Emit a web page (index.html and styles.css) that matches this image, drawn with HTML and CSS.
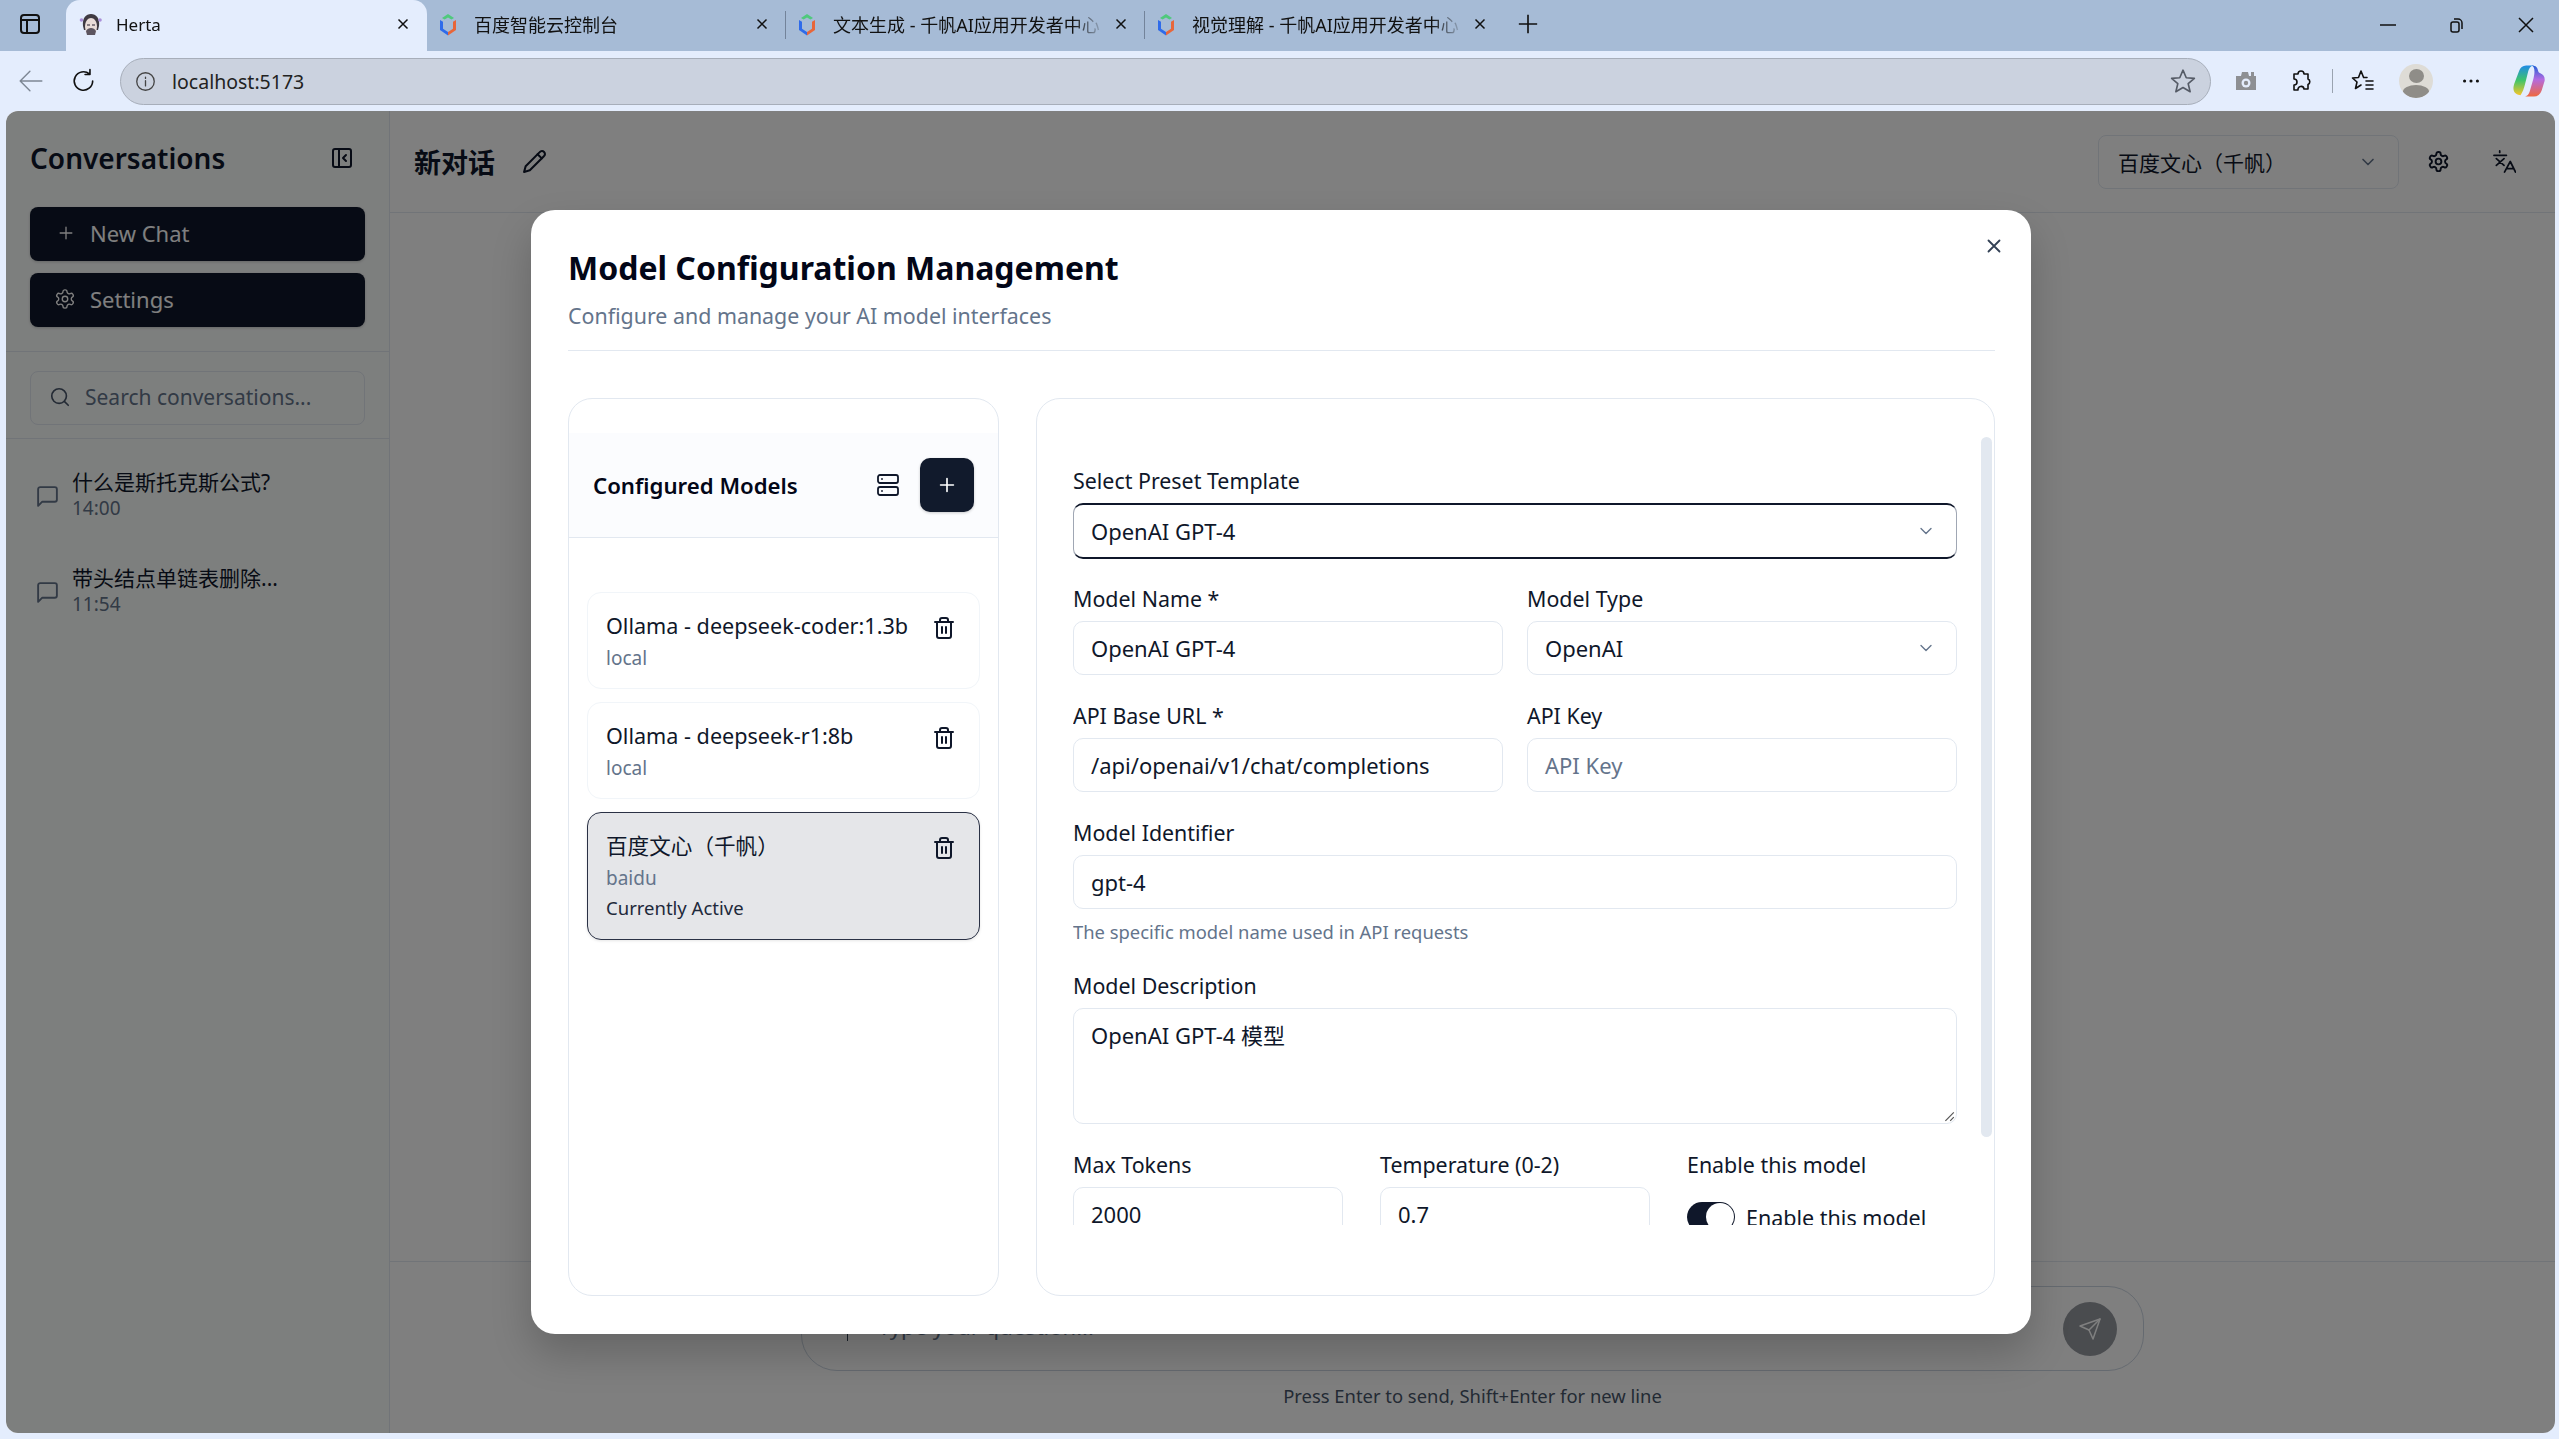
FILE: index.html
```html
<!DOCTYPE html>
<html>

<head>
    <title>Herta</title>
    <link rel="stylesheet" href="styles.css">
</head>

<body>
    <div class="tabstrip">
        <svg class="ico tab-panel" viewBox="0 0 24 24"><rect x="3" y="3" width="18" height="18" rx="3"/><path d="M3 8h18M9 8v13"/></svg>
        <div class="tab active">
            <svg class="favicon" viewBox="0 0 24 24"><path d="M4 14C3 6 7 2 12 2s9 4 8 12l-1 4H5z" fill="#3f3a42"/><path d="M6 15c0-6 3-9 6-9s6 3 6 9l-1 6H7z" fill="#e9dcd8"/><path d="M7 19c1-2 3-3 5-3s4 1 5 3l-1 4H8z" fill="#5c5560"/><circle cx="2.500" cy="8" r="1.800" fill="#a98fd8"/><circle cx="21" cy="8" r="1.800" fill="#a98fd8"/><path d="M8 13h3M13 13h3" stroke="#6a5f68" stroke-width="1.500"/></svg>
            <span class="tab-title">Herta</span>
            <svg class="tab-close" viewBox="0 0 12 12"><path d="M1.500 1.500l9 9M10.500 1.500l-9 9"/></svg>
        </div>
        <div class="tab">
            <svg class="favicon" viewBox="0 0 24 24"><path d="M6 6l6-4 6 4-2.600 1.600L12 5.500 8.600 7.600z" fill="#4fc97c"/><path d="M4 8l3 1.800v7L12 20v3.500L4 18z" fill="#2f6bea"/><path d="M20 8l-3 1.800v7L12 20v3.500L20 18z" fill="#e8663a"/></svg>
            <span class="tab-title">百度智能云控制台</span>
            <svg class="tab-close" viewBox="0 0 12 12"><path d="M1.500 1.500l9 9M10.500 1.500l-9 9"/></svg>
        </div>
        <div class="tab sep">
            <svg class="favicon" viewBox="0 0 24 24"><path d="M6 6l6-4 6 4-2.600 1.600L12 5.500 8.600 7.600z" fill="#4fc97c"/><path d="M4 8l3 1.800v7L12 20v3.500L4 18z" fill="#2f6bea"/><path d="M20 8l-3 1.800v7L12 20v3.500L20 18z" fill="#e8663a"/></svg>
            <span class="tab-title">文本生成 - 千帆AI应用开发者中心</span>
            <svg class="tab-close" viewBox="0 0 12 12"><path d="M1.500 1.500l9 9M10.500 1.500l-9 9"/></svg>
        </div>
        <div class="tab sep">
            <svg class="favicon" viewBox="0 0 24 24"><path d="M6 6l6-4 6 4-2.600 1.600L12 5.500 8.600 7.600z" fill="#4fc97c"/><path d="M4 8l3 1.800v7L12 20v3.500L4 18z" fill="#2f6bea"/><path d="M20 8l-3 1.800v7L12 20v3.500L20 18z" fill="#e8663a"/></svg>
            <span class="tab-title">视觉理解 - 千帆AI应用开发者中心</span>
            <svg class="tab-close" viewBox="0 0 12 12"><path d="M1.500 1.500l9 9M10.500 1.500l-9 9"/></svg>
        </div>
        <svg class="tab-new" viewBox="0 0 24 24"><path d="M12 2v20M2 12h20"/></svg>
        <div class="window-btns">
            <svg class="ico-win" viewBox="0 0 16 16"><path d="M0 8h16"/></svg>
            <svg class="ico-win" viewBox="0 0 16 16"><rect x="2" y="5" width="8" height="10" rx="2"/><path d="M5 2h4a4 4 0 0 1 4 4v6"/></svg>
            <svg class="ico-win" viewBox="0 0 16 16"><path d="M1 1l14 14M15 1L1 15"/></svg>
        </div>
    </div>

    <div class="toolbar">
        <svg class="ico back" viewBox="0 0 24 24"><path d="M22 12H2M11 3l-9 9 9 9"/></svg>
        <svg class="ico reload" viewBox="0 0 24 24"><path d="M20 12a8.500 8.500 0 1 1-3-6.500M17.500 1.500v4.500H13"/></svg>
        <div class="addressbar">
            <svg class="ico info" viewBox="0 0 24 24"><circle cx="12" cy="12" r="10"/><path d="M12 11v6M12 7v1.500"/></svg>
            <span class="url">localhost:5173</span>
            <svg class="ico star" viewBox="0 0 24 24"><path d="M12 2l3 7 7.500.6-5.700 4.900 1.800 7.400L12 18l-6.600 3.900 1.800-7.400L1.500 9.600 9 9z"/></svg>
        </div>
        <div class="tool-icons">
            <svg class="tool-ico" viewBox="0 0 24 24"><path d="M2 7h5l1-4h6l1 4h2V3h3v4h2v14H2z" fill="#8d8f93"/><circle cx="12" cy="14" r="4.500" fill="#e4edfd"/><circle cx="12" cy="14" r="2.200" fill="#8d8f93"/></svg>
            <svg class="ico tool-ico" viewBox="0 0 24 24"><path d="M9 5a3 3 0 0 1 6 0h4v5a3 3 0 0 1 0 5.500V20h-4a3 3 0 0 0-6 1H5v-5a3 3 0 0 0 0-6V5z"/></svg>
            <span class="tool-sep"></span>
            <svg class="ico tool-ico" viewBox="0 0 24 24"><path d="M10 2l2.600 6.500H16M10 2L7.500 8.500 1.500 9l4.500 4-1.500 6.500 5.500-3.500M15 12h7M15 16h7M15 20h7"/></svg>
            <div class="avatar"><span class="avatar-head"></span><span class="avatar-body"></span></div>
            <svg class="tool-ico dots" viewBox="0 0 24 24"><circle cx="5" cy="12" r="1.700"/><circle cx="12" cy="12" r="1.700"/><circle cx="19" cy="12" r="1.700"/></svg>
            <svg class="tool-ico copilot" viewBox="0 0 24 24"><defs><linearGradient id="cp1" x1="0" y1="0" x2="0" y2="1"><stop offset="0" stop-color="#1f8be8"/><stop offset=".5" stop-color="#3fc46a"/><stop offset="1" stop-color="#f5c52a"/></linearGradient><linearGradient id="cp2" x1="0" y1="0" x2="0" y2="1"><stop offset="0" stop-color="#1f5fd8"/><stop offset=".45" stop-color="#b36be0"/><stop offset="1" stop-color="#f0683f"/></linearGradient></defs><path d="M10 1h5c-2 .5-3 2-3.500 4L9 15c-.5 2-1.500 5-3 7-2-.2-5-1-5-5 0-1 .3-2 .6-3L5 5c.8-2.500 2.500-4 5-4z" fill="url(#cp1)"/><path d="M14 1c3 0 4 1.500 4.500 4 .2 1 .3 1 1.500 1.500 2 .8 3.500 2.500 3 5.500l-2 6.500c-1 3-3 4.500-5.500 4.500H8c3 0 4-2 4.600-4l2.600-9C16 7 16.500 2 14 1z" fill="url(#cp2)"/></svg>
        </div>
    </div>

    <div class="page">
        <aside class="sidebar">
            <div class="side-head">
                <h2 class="side-title">Conversations</h2>
                <svg class="ico side-toggle" viewBox="0 0 24 24"><rect x="3" y="3" width="18" height="18" rx="2"/><path d="M9 3v18M16 15l-3-3 3-3"/></svg>
            </div>
            <div class="side-actions">
                <div class="dark-btn"><svg class="ico" viewBox="0 0 24 24"><path d="M5 12h14M12 5v14"/></svg>New Chat</div>
                <div class="dark-btn"><svg class="ico gear-small" viewBox="0 0 24 24"><path d="M12.220 2h-.44a2 2 0 0 0-2 2v.18a2 2 0 0 1-1 1.730l-.43.25a2 2 0 0 1-2 0l-.15-.08a2 2 0 0 0-2.730.73l-.22.38a2 2 0 0 0 .73 2.730l.15.1a2 2 0 0 1 1 1.720v.51a2 2 0 0 1-1 1.740l-.15.09a2 2 0 0 0-.73 2.730l.22.38a2 2 0 0 0 2.730.73l.15-.08a2 2 0 0 1 2 0l.43.25a2 2 0 0 1 1 1.730V20a2 2 0 0 0 2 2h.44a2 2 0 0 0 2-2v-.18a2 2 0 0 1 1-1.730l.43-.25a2 2 0 0 1 2 0l.15.08a2 2 0 0 0 2.730-.73l.22-.39a2 2 0 0 0-.73-2.730l-.15-.08a2 2 0 0 1-1-1.740v-.5a2 2 0 0 1 1-1.740l.15-.09a2 2 0 0 0 .73-2.730l-.22-.38a2 2 0 0 0-2.730-.73l-.15.08a2 2 0 0 1-2 0l-.43-.25a2 2 0 0 1-1-1.730V4a2 2 0 0 0-2-2z"/><circle cx="12" cy="12" r="3"/></svg>Settings</div>
            </div>
            <div class="side-search">
                <div class="search-box">
                    <svg class="ico" viewBox="0 0 24 24"><circle cx="11" cy="11" r="8"/><path d="M21 21l-4.300-4.300"/></svg>
                    <span>Search conversations...</span>
                </div>
            </div>
            <div class="conv-list">
                <div class="conv">
                    <svg class="ico" viewBox="0 0 24 24"><path d="M21 15a2 2 0 0 1-2 2H7l-4 4V5a2 2 0 0 1 2-2h14a2 2 0 0 1 2 2z"/></svg>
                    <div><div class="conv-name">什么是斯托克斯公式?</div><div class="conv-time">14:00</div></div>
                </div>
                <div class="conv">
                    <svg class="ico" viewBox="0 0 24 24"><path d="M21 15a2 2 0 0 1-2 2H7l-4 4V5a2 2 0 0 1 2-2h14a2 2 0 0 1 2 2z"/></svg>
                    <div><div class="conv-name">带头结点单链表删除...</div><div class="conv-time">11:54</div></div>
                </div>
            </div>
        </aside>

        <main class="chat">
            <header class="chat-head">
                <h1 class="chat-title">新对话</h1>
                <svg class="ico edit" viewBox="0 0 24 24"><path d="M17 3a2.850 2.830 0 1 1 4 4L7.500 20.500 2 22l1.500-5.500Z"/><path d="M15 5l4 4"/></svg>
                <div class="model-select"><span>百度文心（千帆）</span><svg class="ico" viewBox="0 0 24 24"><path d="M6 9l6 6 6-6"/></svg></div>
                <svg class="ico head-gear" viewBox="0 0 24 24"><path d="M12.220 2h-.44a2 2 0 0 0-2 2v.18a2 2 0 0 1-1 1.730l-.43.25a2 2 0 0 1-2 0l-.15-.08a2 2 0 0 0-2.730.73l-.22.38a2 2 0 0 0 .73 2.730l.15.1a2 2 0 0 1 1 1.720v.51a2 2 0 0 1-1 1.740l-.15.09a2 2 0 0 0-.73 2.730l.22.38a2 2 0 0 0 2.730.73l.15-.08a2 2 0 0 1 2 0l.43.25a2 2 0 0 1 1 1.730V20a2 2 0 0 0 2 2h.44a2 2 0 0 0 2-2v-.18a2 2 0 0 1 1-1.730l.43-.25a2 2 0 0 1 2 0l.15.08a2 2 0 0 0 2.730-.73l.22-.39a2 2 0 0 0-.73-2.730l-.15-.08a2 2 0 0 1-1-1.740v-.5a2 2 0 0 1 1-1.740l.15-.09a2 2 0 0 0 .73-2.730l-.22-.38a2 2 0 0 0-2.730-.73l-.15.08a2 2 0 0 1-2 0l-.43-.25a2 2 0 0 1-1-1.730V4a2 2 0 0 0-2-2z"/><circle cx="12" cy="12" r="3"/></svg>
                <svg class="ico head-lang" viewBox="0 0 24 24"><path d="M7 1v1.500M1 5.500h13M3.500 9l8 7M11.500 9l-8 7M12 23l6-11 5.500 11M14 19.500h7.500"/></svg>
            </header>
            <div class="chat-body"></div>
            <footer class="chat-foot">
                <div class="composer">
                    <span class="caret"></span>
                    <span class="composer-text">Type your question...</span>
                    <div class="send-btn"><svg class="ico" viewBox="0 0 24 24"><path d="M22 2l-7 20-4-9-9-4z"/><path d="M22 2L11 13"/></svg></div>
                </div>
                <div class="hint">Press Enter to send, Shift+Enter for new line</div>
            </footer>
        </main>

        <div class="overlay"></div>

        <section class="modal">
            <svg class="ico modal-close" viewBox="0 0 24 24"><path d="M18 6L6 18M6 6l12 12"/></svg>
            <div class="modal-head">
                <h2 class="modal-title">Model Configuration Management</h2>
                <p class="modal-sub">Configure and manage your AI model interfaces</p>
            </div>
            <div class="modal-body">
                <div class="panel models-panel">
                    <div class="models-head">
                        <h3 class="models-title">Configured Models</h3>
                        <svg class="ico server" viewBox="0 0 24 24"><rect x="2" y="2" width="20" height="8" rx="2"/><rect x="2" y="14" width="20" height="8" rx="2"/><path d="M6 6h.01M6 18h.01"/></svg>
                        <div class="add-btn"><svg class="ico" viewBox="0 0 24 24"><path d="M5 12h14M12 5v14"/></svg></div>
                    </div>
                    <div class="model-list">
                        <div class="model-item">
                            <div class="model-info"><div class="model-name">Ollama - deepseek-coder:1.3b</div><div class="model-kind">local</div></div>
                            <svg class="ico trash" viewBox="0 0 24 24"><path d="M3 6h18M19 6v14c0 1-1 2-2 2H7c-1 0-2-1-2-2V6M8 6V4c0-1 1-2 2-2h4c1 0 2 1 2 2v2M10 11v6M14 11v6"/></svg>
                        </div>
                        <div class="model-item">
                            <div class="model-info"><div class="model-name">Ollama - deepseek-r1:8b</div><div class="model-kind">local</div></div>
                            <svg class="ico trash" viewBox="0 0 24 24"><path d="M3 6h18M19 6v14c0 1-1 2-2 2H7c-1 0-2-1-2-2V6M8 6V4c0-1 1-2 2-2h4c1 0 2 1 2 2v2M10 11v6M14 11v6"/></svg>
                        </div>
                        <div class="model-item selected">
                            <div class="model-info"><div class="model-name">百度文心（千帆）</div><div class="model-kind">baidu</div><div class="model-state">Currently Active</div></div>
                            <svg class="ico trash" viewBox="0 0 24 24"><path d="M3 6h18M19 6v14c0 1-1 2-2 2H7c-1 0-2-1-2-2V6M8 6V4c0-1 1-2 2-2h4c1 0 2 1 2 2v2M10 11v6M14 11v6"/></svg>
                        </div>
                    </div>
                </div>

                <div class="panel form-panel">
                    <div class="scroll-thumb"></div>
                    <div class="form-scroll">
                        <div class="field first">
                            <label class="lbl">Select Preset Template</label>
                            <div class="ctl focused">OpenAI GPT-4<svg class="ico chev" viewBox="0 0 24 24"><path d="M6 9l6 6 6-6"/></svg></div>
                        </div>
                        <div class="row two">
                            <div class="field"><label class="lbl">Model Name *</label><div class="ctl">OpenAI GPT-4</div></div>
                            <div class="field"><label class="lbl">Model Type</label><div class="ctl">OpenAI<svg class="ico chev" viewBox="0 0 24 24"><path d="M6 9l6 6 6-6"/></svg></div></div>
                        </div>
                        <div class="row two">
                            <div class="field"><label class="lbl">API Base URL *</label><div class="ctl">/api/openai/v1/chat/completions</div></div>
                            <div class="field"><label class="lbl">API Key</label><div class="ctl placeholder">API Key</div></div>
                        </div>
                        <div class="field">
                            <label class="lbl">Model Identifier</label>
                            <div class="ctl">gpt-4</div>
                            <p class="help">The specific model name used in API requests</p>
                        </div>
                        <div class="field">
                            <label class="lbl">Model Description</label>
                            <div class="ctl area">OpenAI GPT-4 模型<svg class="grip" viewBox="0 0 10 10"><path d="M9 2L2 9M9 6L6 9"/></svg></div>
                        </div>
                        <div class="row three">
                            <div class="field"><label class="lbl">Max Tokens</label><div class="ctl">2000</div></div>
                            <div class="field"><label class="lbl">Temperature (0-2)</label><div class="ctl">0.7</div></div>
                            <div class="field">
                                <label class="lbl">Enable this model</label>
                                <div class="toggle-row"><span class="toggle"><span class="knob"></span></span>Enable this model</div>
                            </div>
                        </div>
                    </div>
                </div>
            </div>
        </section>
    </div>
</body>

</html>
```
FILE: styles.css
```css
* {
    box-sizing: border-box;
}

html,
body {
    margin: 0;
    height: 100%;
    overflow: hidden;
}

body {
    display: flex;
    flex-direction: column;
    background-color: #e4edfd;
    color: #0f172a;
    font-family: "Noto Sans", "Noto Sans CJK SC", sans-serif;
}

h1,
h2,
h3,
p {
    margin: 0;
}

.ico {
    fill: none;
    stroke: currentColor;
    stroke-width: 2;
    stroke-linecap: round;
    stroke-linejoin: round;
    flex-shrink: 0;
}

/* browser chrome */
.tabstrip {
    display: flex;
    align-items: center;
    height: 51px;
    flex-shrink: 0;
    background-color: #a6bbd6;
    color: #111;
    padding-left: 18px;
}

.tab-panel {
    width: 24px;
    height: 24px;
    margin: 0 24px 3px 0;
}

.tab {
    display: flex;
    align-items: center;
    width: 359px;
    height: 51px;
    padding: 0 16px 3px 9px;
    position: relative;
}

.tab.active {
    width: 361px;
    padding-left: 13px;
    background-color: #e4edfd;
    border-radius: 14px 14px 0 0;
}

.tab.sep::before {
    content: "";
    position: absolute;
    left: -1px;
    top: 11px;
    height: 28px;
    border-left: 1px solid #73839a;
}

.favicon {
    width: 24px;
    height: 24px;
    flex-shrink: 0;
    margin-right: 14px;
}

.tab.active .favicon {
    margin-right: 13px;
}

.tab-title {
    flex: 1;
    font-size: 18px;
    white-space: nowrap;
    overflow: hidden;
    -webkit-mask-image: linear-gradient(to right, #000 88%, transparent);
    mask-image: linear-gradient(to right, #000 88%, transparent);
}

.tab.active .tab-title {
    font-size: 17px;
}

.tab-close {
    width: 12px;
    height: 12px;
    margin-left: 10px;
    margin-right: 2px;
    fill: none;
    stroke: #111;
    stroke-width: 1.500;
    flex-shrink: 0;
}

.tab-new {
    width: 22px;
    height: 22px;
    margin: 0 0 3px 13px;
    fill: none;
    stroke: #111;
    stroke-width: 1.800;
}

.window-btns {
    display: flex;
    align-items: center;
    gap: 53px;
    margin-left: auto;
    margin-right: 25px;
    margin-bottom: 2px;
}

.ico-win {
    width: 16px;
    height: 16px;
    fill: none;
    stroke: #111;
    stroke-width: 1.500;
}

.toolbar {
    display: flex;
    align-items: center;
    height: 60px;
    flex-shrink: 0;
    padding-left: 18px;
    color: #111;
}

.back {
    width: 26px;
    height: 26px;
    color: #7d8794;
    stroke-width: 1.300;
}

.reload {
    width: 26px;
    height: 26px;
    margin-left: 27px;
    stroke-width: 1.500;
}

.addressbar {
    display: flex;
    align-items: center;
    width: 2091px;
    height: 47px;
    margin-left: 23px;
    padding: 0 14px 0 14px;
    background-color: #cbd2df;
    border: 1.500px solid #a7aeba;
    border-radius: 24px;
}

.info {
    width: 21px;
    height: 21px;
    stroke-width: 1.500;
    color: #444;
}

.url {
    flex: 1;
    margin-left: 16px;
    font-size: 19.500px;
    color: #222;
}

.star {
    width: 26px;
    height: 26px;
    stroke-width: 1.500;
    color: #555b66;
}

.tool-icons {
    display: flex;
    align-items: center;
    margin-left: 23px;
}

.tool-ico {
    width: 24px;
    height: 24px;
    stroke-width: 1.600;
    margin-right: 31px;
}

.tool-sep {
    height: 24px;
    border-left: 1px solid #9aa3b0;
    margin: 0 18px 0 -12px;
}

.tool-icons .tool-ico:nth-of-type(3) {
    margin-right: 24px;
}

.avatar {
    width: 34px;
    height: 34px;
    margin-right: 27px;
    border-radius: 50%;
    background-color: #dedcd6;
    overflow: hidden;
    display: flex;
    flex-direction: column;
    align-items: center;
}

.avatar-head {
    width: 15px;
    height: 17px;
    margin-top: 5px;
    border-radius: 50%;
    background-color: #8f8d88;
}

.avatar-body {
    width: 26px;
    height: 16px;
    margin-top: 2px;
    border-radius: 50%;
    background-color: #8f8d88;
}

.dots {
    width: 22px;
    height: 22px;
    fill: #111;
    margin-right: 30px;
}

.copilot {
    width: 34px;
    height: 34px;
    margin-right: 0;
}

/* the app page */
.page {
    position: relative;
    display: flex;
    flex: 1;
    margin: 0 4px 6px 6px;
    background-color: #fff;
    border-radius: 12px;
    overflow: hidden;
}

.overlay {
    position: absolute;
    inset: 0;
    background-color: rgba(0, 0, 0, 0.5);
}

.sidebar {
    width: 384px;
    flex-shrink: 0;
    border-right: 1px solid #e2e8f0;
    background-color: #fbfefd;
}

.side-head {
    display: flex;
    align-items: center;
    justify-content: space-between;
    height: 96px;
    padding: 0 24px 2px;
}

.side-title {
    font-size: 28px;
    font-weight: 600;
}

.side-toggle {
    width: 24px;
    height: 24px;
    margin-right: 11px;
}

.side-actions {
    display: flex;
    flex-direction: column;
    gap: 12px;
    padding: 0 24px 24px;
    border-bottom: 1px solid #e2e8f0;
}

.dark-btn {
    display: flex;
    align-items: center;
    gap: 14px;
    height: 54px;
    padding: 0 0 2px 26px;
    border-radius: 8px;
    background-color: #0f172a;
    color: #fff;
    font-size: 22px;
    box-shadow: 0 1px 3px rgba(0, 0, 0, 0.2);
}

.dark-btn .ico {
    width: 20px;
    height: 20px;
    stroke-width: 1.600;
}

.dark-btn .gear-small {
    width: 22px;
    height: 22px;
    margin-left: -2px;
    stroke-width: 1.500;
}

.side-search {
    padding: 19px 24px 13px;
    border-bottom: 1px solid #e2e8f0;
}

.search-box {
    display: flex;
    align-items: center;
    gap: 14px;
    height: 54px;
    padding: 0 0 2px 18px;
    border: 1px solid #e2e8f0;
    border-radius: 8px;
    color: #64748b;
    font-size: 21px;
}

.search-box .ico {
    width: 22px;
    height: 22px;
    stroke-width: 1.800;
    color: #475569;
}

.conv-list {
    padding: 7px 28px 0 29px;
}

.conv {
    display: flex;
    align-items: center;
    gap: 12px;
    height: 96px;
}

.conv .ico {
    width: 25px;
    height: 25px;
    color: #64748b;
    margin-top: 4px;
    stroke-width: 1.800;
}

.conv-name {
    font-size: 21px;
    line-height: 28px;
}

.conv-time {
    font-size: 19px;
    line-height: 24px;
    color: #64748b;
}

.chat {
    display: flex;
    flex-direction: column;
    flex: 1;
    min-width: 0;
}

.chat-head {
    display: flex;
    align-items: center;
    height: 102px;
    padding: 0 39px 0 24px;
    border-bottom: 1px solid #e2e8f0;
}

.chat-title {
    font-size: 27px;
    font-weight: 700;
}

.edit {
    width: 25px;
    height: 25px;
    margin-left: 27px;
}

.model-select {
    display: flex;
    align-items: center;
    justify-content: space-between;
    width: 301px;
    height: 54px;
    margin-left: auto;
    padding: 0 20px 0 19px;
    border: 1px solid #e2e8f0;
    border-radius: 8px;
    font-size: 21px;
}

.model-select .ico {
    width: 20px;
    height: 20px;
    color: #64748b;
}

.head-gear {
    width: 23px;
    height: 23px;
    margin-left: 28px;
}

.head-lang {
    width: 23px;
    height: 23px;
    margin-left: 43px;
    stroke-width: 1.800;
}

.chat-body {
    flex: 1;
}

.chat-foot {
    height: 172px;
    padding-top: 24px;
    border-top: 1px solid #e2e8f0;
    display: flex;
    flex-direction: column;
    align-items: center;
}

.composer {
    display: flex;
    align-items: center;
    width: 1343px;
    height: 85px;
    padding: 0 26px 0 45px;
    border: 1px solid #cbd5e1;
    border-radius: 36px;
    font-size: 22px;
    color: #64748b;
}

.caret {
    width: 1px;
    height: 26px;
    margin: 0 30px 2px 0;
    background-color: #334155;
}

.composer-text {
    flex: 1;
    margin-bottom: 6px;
}

.send-btn {
    display: flex;
    align-items: center;
    justify-content: center;
    width: 54px;
    height: 54px;
    border-radius: 50%;
    background-color: #94989f;
    color: #fff;
}

.send-btn .ico {
    width: 24px;
    height: 24px;
    stroke-width: 1.500;
}

.hint {
    margin-top: 12px;
    font-size: 18.400px;
    color: #475569;
}

/* config dialog */
.modal {
    position: absolute;
    left: 525px;
    top: 99px;
    width: 1500px;
    height: 1124px;
    padding: 36px 36px 38px 37px;
    display: flex;
    flex-direction: column;
    background-color: #fff;
    border-radius: 24px;
    box-shadow: 0 20px 40px rgba(0, 0, 0, 0.2);
}

.modal-close {
    position: absolute;
    top: 25px;
    right: 26px;
    width: 22px;
    height: 22px;
    color: #334155;
}

.modal-head {
    height: 105px;
    border-bottom: 1px solid #e2e8f0;
}

.modal-title {
    font-size: 32px;
    line-height: 44px;
    font-weight: 700;
    color: #020617;
}

.modal-sub {
    margin-top: 11px;
    font-size: 21.400px;
    line-height: 30px;
    color: #64748b;
}

.modal-body {
    display: flex;
    gap: 37px;
    flex: 1;
    margin-top: 47px;
    min-height: 0;
}

.panel {
    position: relative;
    border: 1px solid #e2e8f0;
    border-radius: 24px;
}

.models-panel {
    width: 431px;
    flex-shrink: 0;
    padding-top: 34px;
}

.models-head {
    display: flex;
    align-items: center;
    height: 105px;
    padding: 0 24px;
    background-color: #fbfcfe;
    border-bottom: 1px solid #e2e8f0;
}

.models-title {
    font-size: 22.200px;
    font-weight: 600;
    color: #020617;
    flex: 1;
}

.server {
    width: 24px;
    height: 24px;
    margin-right: 20px;
    stroke-width: 1.800;
}

.add-btn {
    display: flex;
    align-items: center;
    justify-content: center;
    width: 54px;
    height: 54px;
    border-radius: 10px;
    background-color: #111a2c;
    color: #fff;
    box-shadow: 0 1px 3px rgba(0, 0, 0, 0.2);
}

.add-btn .ico {
    width: 22px;
    height: 22px;
    stroke-width: 1.800;
}

.model-list {
    display: flex;
    flex-direction: column;
    gap: 13px;
    padding: 54px 18px 0;
}

.model-item {
    display: flex;
    justify-content: space-between;
    padding: 18px 23px 0 18px;
    min-height: 97px;
    border: 1px solid #f1f5f9;
    border-radius: 14px;
}

.model-item.selected {
    height: 128px;
    background-color: #e5e6e9;
    border: 1.500px solid #2a3145;
    box-shadow: 0 1px 3px rgba(0, 0, 0, 0.1);
}

.model-name {
    font-size: 21.600px;
    line-height: 30px;
    color: #0f172a;
}

.model-kind {
    margin-top: 4px;
    font-size: 19px;
    line-height: 26px;
    color: #64748b;
}

.model-state {
    margin-top: 4px;
    font-size: 18.500px;
    line-height: 26px;
    color: #1e293b;
}

.trash {
    width: 24px;
    height: 24px;
    margin-top: 5px;
}

.form-panel {
    flex: 1;
    min-width: 0;
}

.scroll-thumb {
    position: absolute;
    top: 38px;
    right: 2px;
    width: 11px;
    height: 700px;
    border-radius: 6px;
    background-color: #e2e8f0;
}

.form-scroll {
    height: 826px;
    margin: 0 37px 0 36px;
    padding-top: 67px;
    overflow: hidden;
}

.field {
    min-width: 0;
    margin-bottom: 26px;
}

.field.first {
    margin-bottom: 25px;
}

.row {
    display: grid;
}

.row.two {
    grid-template-columns: 1fr 1fr;
    gap: 24px;
}

.row.three {
    grid-template-columns: 1fr 1fr 1fr;
    gap: 37px;
}

.lbl {
    display: block;
    font-size: 21.400px;
    line-height: 30px;
    margin-bottom: 7px;
}

.ctl {
    display: flex;
    align-items: center;
    justify-content: space-between;
    height: 54px;
    padding: 0 20px 0 17px;
    border: 1px solid #e2e8f0;
    border-radius: 10px;
    font-size: 22px;
}

.ctl.focused {
    height: 56px;
    border: 2px solid #0f172a;
    border-left: 1px solid #a0a7b4;
    border-right: 1px solid #a0a7b4;
}

.ctl.placeholder {
    color: #64748b;
}

.chev {
    width: 20px;
    height: 20px;
    color: #64748b;
    stroke-width: 1.600;
}

.help {
    margin-top: 10px;
    font-size: 18.400px;
    line-height: 26px;
    color: #64748b;
}

.ctl.area {
    position: relative;
    align-items: flex-start;
    height: 116px;
    padding-top: 9px;
}

.grip {
    position: absolute;
    right: 1px;
    bottom: 1px;
    width: 12px;
    height: 12px;
    fill: none;
    stroke: #555;
    stroke-width: 1;
}

.toggle-row {
    display: flex;
    align-items: center;
    gap: 11px;
    height: 30px;
    margin-top: 22px;
    font-size: 21.500px;
}

.toggle {
    display: flex;
    align-items: center;
    justify-content: flex-end;
    width: 48px;
    height: 30px;
    padding: 1px;
    border-radius: 15px;
    background-color: #0f172a;
}

.knob {
    width: 28px;
    height: 28px;
    border-radius: 50%;
    background-color: #fff;
}
```
